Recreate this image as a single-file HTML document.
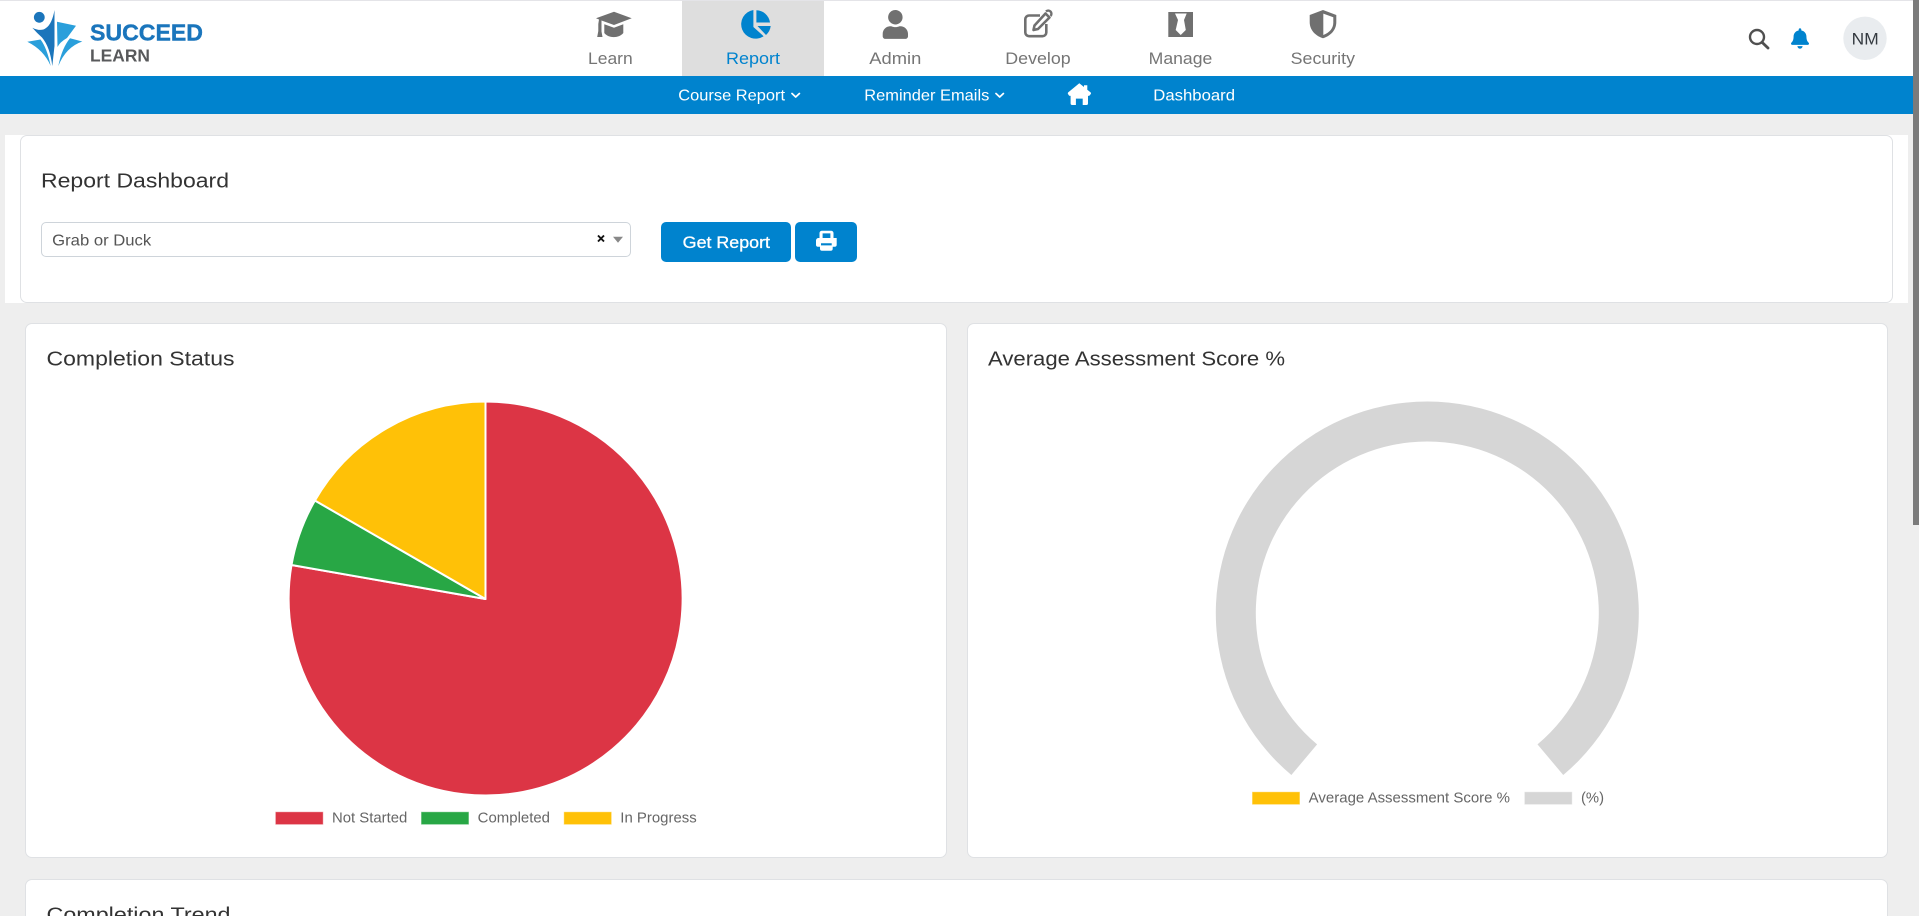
<!DOCTYPE html>
<html lang="en">
<head>
<meta charset="utf-8">
<title>Report Dashboard</title>
<style>
html,body{margin:0;padding:0;width:1919px;height:916px;overflow:hidden;background:#eee;}
body{position:relative;font-family:"Liberation Sans",sans-serif;}
.b{position:absolute;box-sizing:border-box;}
.card{background:#fff;border:1px solid #dfe1e4;border-radius:7px;}
svg{position:absolute;left:0;top:0;}
text{font-family:"Liberation Sans",sans-serif;}
</style>
</head>
<body>
<div class="b" style="left:0;top:0;width:1913px;height:1px;background:#e4e4e8"></div>
<div class="b" style="left:0;top:1px;width:1913px;height:75px;background:#fff"></div>
<div class="b" style="left:682px;top:1px;width:142px;height:75px;background:#dedede"></div>
<div class="b" style="left:0;top:76px;width:1913px;height:38px;background:#0083ce"></div>
<div class="b" style="left:1913px;top:0;width:6px;height:525px;background:#7b7b7b"></div>
<div class="b" style="left:5px;top:135px;width:1903px;height:168px;background:#fff"></div>
<div class="b card" style="left:20px;top:135px;width:1873px;height:168px"></div>
<div class="b card" style="left:25px;top:323px;width:922px;height:535px"></div>
<div class="b card" style="left:967px;top:323px;width:921px;height:535px"></div>
<div class="b card" style="left:25px;top:879px;width:1863px;height:60px"></div>
<div class="b" style="left:41px;top:222px;width:590px;height:35px;background:#fff;border:1px solid #ced4da;border-radius:5px"></div>
<div class="b" style="left:661px;top:222px;width:130px;height:40px;background:#0083ce;border-radius:5px"></div>
<div class="b" style="left:795px;top:222px;width:62px;height:40px;background:#0083ce;border-radius:5px"></div>

<svg width="1919" height="916" viewBox="0 0 1919 916" xmlns="http://www.w3.org/2000/svg">
  <!-- logo -->
  <circle cx="39.3" cy="17.3" r="5.4" fill="#1b75bb"/>
  <path d="M32.3 27.7Q41 32 46 28Q52 24 54.5 10L54.5 46L52.3 66Q50 47 42 37.5Q37 33 32.3 27.7Z" fill="#1b75bb"/>
  <path d="M57 21.7L76 25.7L67 38Q60 42 57.5 47Z" fill="#2a9fdb"/>
  <path d="M58.3 66Q62 48 70 38.3L82.3 41.5Q66 47 58.3 66Z" fill="#2a9fdb"/>
  <path d="M27.3 41.7L40.5 39.5Q47 48 50.7 66Q44 50 27.3 41.7Z" fill="#2a9fdb"/>
  <text x="90" y="40.7" font-size="23" font-weight="700" fill="#1a75bc" textLength="113" lengthAdjust="spacingAndGlyphs" stroke="#1a75bc" stroke-width=".4">SUCCEED</text>
  <text x="90" y="61.3" font-size="17.5" font-weight="700" fill="#58595b" textLength="60" lengthAdjust="spacingAndGlyphs">LEARN</text>

  <!-- nav icons -->
  <g fill="#707070">
    <path d="M614 11.7L631.7 18.3L614 25L601.5 20.5L601.5 24V31.5L602.5 37H597.2L598.3 31V24L599 19.5L596 18.3Z"/>
    <path d="M604.3 24.2L614 27.8L623.3 24.2V33C619 38.5 608.5 38.5 604.3 33Z"/>
  </g>
  <g fill="#0083ce">
    <path d="M753.4 10A14.4 14.4 0 1 0 763.6 36.2L753.4 27Z"/>
    <path d="M756.4 10.2A14.2 14.2 0 0 1 770 22.5H756.4Z"/>
    <path d="M757.5 26H770.7A14.4 14.4 0 0 1 766 35Z"/>
  </g>
  <path transform="translate(882.7 10) scale(.0565)" fill="#707070" d="M224 256c70.7 0 128-57.3 128-128S294.7 0 224 0 96 57.3 96 128s57.3 128 128 128zm89.6 32h-16.7c-22.2 10.2-46.9 16-72.9 16s-50.6-5.8-72.9-16h-16.7C60.2 288 0 348.2 0 422.4V464c0 26.5 21.5 48 48 48h352c26.5 0 48-21.5 48-48v-41.6c0-74.2-60.2-134.4-134.4-134.4z"/>
  <g fill="none" stroke="#707070" stroke-width="2.6" stroke-linejoin="round">
    <path d="M1040 15.5H1029A3.8 3.8 0 0 0 1025.3 19.3V32.5A3.8 3.8 0 0 0 1029 36.2H1042.5A3.8 3.8 0 0 0 1046.3 32.5V24"/>
    <path d="M1034.5 25.5L1045.5 13.5L1049.5 17.5L1038 29L1033.5 30Z"/>
    <path d="M1046 11.5A2.3 2.3 0 0 1 1050.5 16" stroke-width="2.4"/>
  </g>
  <rect x="1168.3" y="12" width="24.7" height="25" fill="#707070"/>
  <path d="M1175 13.5H1186.7L1184 20L1185.8 30L1180.7 35L1175.7 30L1178 20Z" fill="#fff"/>
  <path d="M1323 10L1336.3 15V22C1336.3 30 1331 35.5 1323 38.3C1315 35.5 1309.7 30 1309.7 22V15Z" fill="#707070"/>
  <path d="M1323.3 13.6L1333.3 17.2V22.5C1333.3 28.5 1329.5 32.5 1323.3 35Z" fill="#fff"/>

  <!-- nav labels -->
  <g font-size="17" fill="#757575">
    <text x="588" y="64" textLength="44.7" lengthAdjust="spacingAndGlyphs">Learn</text>
    <text x="726" y="64" textLength="54" lengthAdjust="spacingAndGlyphs" fill="#0083ce">Report</text>
    <text x="869.3" y="64" textLength="52" lengthAdjust="spacingAndGlyphs">Admin</text>
    <text x="1005.3" y="64" textLength="65.4" lengthAdjust="spacingAndGlyphs">Develop</text>
    <text x="1148.7" y="64" textLength="63.6" lengthAdjust="spacingAndGlyphs">Manage</text>
    <text x="1290.7" y="64" textLength="64.3" lengthAdjust="spacingAndGlyphs">Security</text>
  </g>

  <!-- right header -->
  <circle cx="1757" cy="37" r="7" fill="none" stroke="#505050" stroke-width="2.4"/>
  <path d="M1762 42.2L1768 48" stroke="#505050" stroke-width="2.8" stroke-linecap="round"/>
  <path transform="translate(1791 28.3) scale(.0402 .0398)" fill="#0083ce" d="M224 512c35.32 0 63.97-28.65 63.97-64H160.03c0 35.35 28.65 64 63.97 64zm215.39-149.71c-19.32-20.76-55.47-51.99-55.47-154.29 0-77.7-54.48-139.9-127.94-155.16V32c0-17.67-14.32-32-31.98-32s-31.98 14.33-31.98 32v20.84C118.56 68.1 64.08 130.3 64.08 208c0 102.3-36.15 133.53-55.47 154.29-6 6.45-8.66 14.16-8.61 21.71.11 16.4 12.98 32 32.1 32h383.8c19.12 0 32-15.6 32.1-32 .05-7.55-2.61-15.27-8.61-21.71z"/>
  <circle cx="1865" cy="38.3" r="21.7" fill="#e9ecef"/>
  <text x="1851.7" y="44.5" font-size="16.5" fill="#343a40" textLength="27" lengthAdjust="spacingAndGlyphs">NM</text>

  <!-- sub nav -->
  <g font-size="16" fill="#fff">
    <text x="678.3" y="100.5" textLength="106.7" lengthAdjust="spacingAndGlyphs">Course Report</text>
    <text x="864.3" y="100.5" textLength="125" lengthAdjust="spacingAndGlyphs">Reminder Emails</text>
    <text x="1153.3" y="100.5" textLength="81.7" lengthAdjust="spacingAndGlyphs">Dashboard</text>
  </g>
  <path d="M792 93.5L795.7 97L799.4 93.5M996 93.5L999.7 97L1003.4 93.5" fill="none" stroke="#fff" stroke-width="1.7" stroke-linecap="round" stroke-linejoin="round"/>
  <path fill="#fff" fill-rule="evenodd" d="M1079.3 83.3L1084 87V85.2H1087.3V89.7L1090.6 92.4Q1091.4 93.2 1090.8 94L1089.6 95.5Q1088.9 96.2 1088 95.7V103.4Q1088 105 1086.4 105H1082.7V98.6H1075.9V105H1072.2Q1070.6 105 1070.6 103.4V95.7Q1069.7 96.2 1069 95.5L1068 94Q1067.4 93.2 1068.2 92.4Z"/>

  <!-- titles -->
  <g font-size="20.5" fill="#333">
    <text x="41" y="187.5" textLength="188" lengthAdjust="spacingAndGlyphs">Report Dashboard</text>
    <text x="46.5" y="365.5" textLength="188" lengthAdjust="spacingAndGlyphs">Completion Status</text>
    <text x="988" y="365.5" textLength="297" lengthAdjust="spacingAndGlyphs">Average Assessment Score %</text>
    <text x="46.5" y="921.5" textLength="184" lengthAdjust="spacingAndGlyphs">Completion Trend</text>
  </g>

  <!-- select -->
  <text x="52.2" y="245.5" font-size="16" fill="#555" textLength="99" lengthAdjust="spacingAndGlyphs">Grab or Duck</text>
  <path d="M598 235.5L604 241.5M604 235.5L598 241.5" stroke="#111" stroke-width="1.9"/>
  <path d="M613 236.7H623L618 242.7Z" fill="#888"/>

  <!-- buttons -->
  <text x="682.7" y="248" font-size="16.5" fill="#fff" stroke="#fff" stroke-width=".3" textLength="87.3" lengthAdjust="spacingAndGlyphs">Get Report</text>
  <path fill="#fff" fill-rule="evenodd" d="M822 230.7H831A2.5 2.5 0 0 1 833.5 233.2V238H836.7V244.8A2 2 0 0 1 834.7 246.8H832.7V248.7A2 2 0 0 1 830.7 250.7H822A2 2 0 0 1 820 248.7V246.8H818A2 2 0 0 1 816 244.8V240.5A2.5 2.5 0 0 1 818.5 238H819.5V233.2A2.5 2.5 0 0 1 822 230.7ZM822.6 233.4V238H830.4V233.4ZM821 243.2V245.4H831.7V243.2Z"/>

  <!-- pie -->
  <g stroke="#fff" stroke-width="2" stroke-linejoin="round">
    <path d="M485.5 599L485.5 401.5A197 197 0 1 1 291.5 565Z" fill="#dc3545"/>
    <path d="M485.5 599L291.5 565A197 197 0 0 1 314.9 500.5Z" fill="#28a745"/>
    <path d="M485.5 599L314.9 500.5A197 197 0 0 1 485.5 401.5Z" fill="#ffc107"/>
  </g>
  <g stroke-width="1" stroke-opacity=".6" stroke="#fff">
    <rect x="275.3" y="811.7" width="48" height="13" fill="#dc3545"/>
    <rect x="421" y="811.7" width="48" height="13" fill="#28a745"/>
    <rect x="563.7" y="811.7" width="48" height="13" fill="#ffc107"/>
    <rect x="1252" y="791.7" width="48" height="13" fill="#ffc107"/>
    <rect x="1524.3" y="791.7" width="48" height="13" fill="#d6d6d6"/>
  </g>
  <g font-size="14.7" fill="#666">
    <text x="332" y="822.3" textLength="75.3" lengthAdjust="spacingAndGlyphs">Not Started</text>
    <text x="477.7" y="822.3" textLength="72.3" lengthAdjust="spacingAndGlyphs">Completed</text>
    <text x="620.3" y="822.3" textLength="76.4" lengthAdjust="spacingAndGlyphs">In Progress</text>
    <text x="1308.7" y="802.3" textLength="201.3" lengthAdjust="spacingAndGlyphs">Average Assessment Score %</text>
    <text x="1581" y="802.3" textLength="23" lengthAdjust="spacingAndGlyphs">(%)</text>
  </g>

  <!-- gauge -->
  <path d="M1291.35 775A211.5 211.5 0 1 1 1563.25 775L1537.5 744.4A171.5 171.5 0 1 0 1317.1 744.4Z" fill="#d6d6d6"/>
</svg>
</body>
</html>
